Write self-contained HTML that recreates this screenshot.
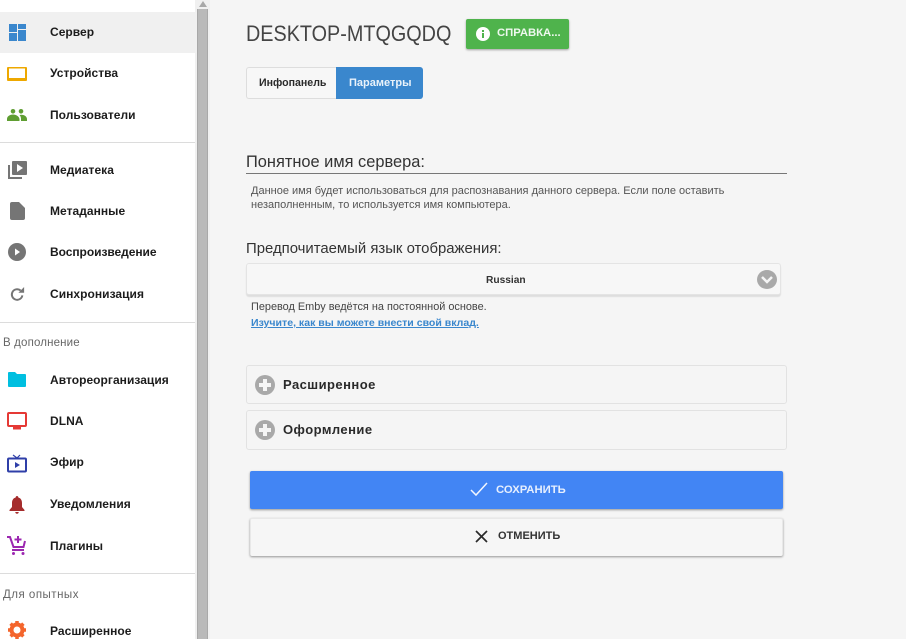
<!DOCTYPE html>
<html><head><meta charset="utf-8">
<style>
html,body{margin:0;padding:0;width:906px;height:639px;overflow:hidden;background:#f5f5f5;font-family:"Liberation Sans",sans-serif;}
.a{position:absolute;white-space:nowrap;}
#side{position:absolute;left:0;top:0;width:195px;height:639px;background:#fff;}
.nav{position:absolute;left:50px;font-size:12px;font-weight:bold;color:#1c1c1c;line-height:14px;white-space:nowrap;letter-spacing:.04px;}
.hr{position:absolute;left:0;width:195px;height:1px;background:#dcdcdc;}
.sec{position:absolute;left:3px;font-size:11.5px;color:#666;line-height:14px;white-space:nowrap;letter-spacing:.15px;}
svg{position:absolute;display:block;}
.coll{position:absolute;left:246px;width:539px;border:1px solid #e2e2e2;border-radius:3px;}
.plus{position:absolute;left:255px;width:20px;height:20px;border-radius:50%;background:#a9a9a9;}
.plus:before{content:"";position:absolute;left:4px;top:8px;width:12px;height:4px;background:#f5f5f5;}
.plus:after{content:"";position:absolute;left:8px;top:4px;width:4px;height:12px;background:#f5f5f5;}
.ct{position:absolute;left:283px;font-size:13px;font-weight:bold;color:#2a2a2a;line-height:16px;letter-spacing:.45px;white-space:nowrap;}
</style></head><body>
<div id="side">
<div style="position:absolute;left:0;top:12px;width:195px;height:41px;background:#f0f0f0"></div>

<svg style="left:9px;top:24px" width="17" height="17" viewBox="0 0 17 17"><path fill="#3a87cd" d="M0 0h8v8H0zM9 0h8v5H9zM0 9h8v8H0zM9 6h8v11H9z"/></svg>
<div class="nav" style="top:25px">Сервер</div>

<svg style="left:7px;top:67px" width="20" height="14" viewBox="0 0 20 14"><path fill="#eea800" d="M1 0h18a1 1 0 0 1 1 1v12a1 1 0 0 1-1 1H1a1 1 0 0 1-1-1V1a1 1 0 0 1 1-1zM2 1.500V11h16V1.500z" fill-rule="evenodd"/></svg>
<div class="nav" style="top:66px">Устройства</div>

<svg style="left:7px;top:109px" width="20" height="12" viewBox="0 0 20 12"><circle cx="6" cy="2.300" r="2.300" fill="#5f9e32"/><circle cx="14" cy="2.300" r="2.300" fill="#5f9e32"/><path fill="#5f9e32" d="M0 12v-2c0-3 3.500-4.500 6-4.500s6 1.500 6.500 4.500v2zM14 12v-2c0-1.600-.5-3-1.500-4 3-1 7.500.8 7.500 4v2z"/></svg>
<div class="nav" style="top:108px">Пользователи</div>

<div class="hr" style="top:142px"></div>

<svg style="left:8px;top:160px" width="19" height="20" viewBox="0 0 19 20"><path fill="none" stroke="#757575" stroke-width="2" d="M1 5v13h13"/><rect x="4" y="1" width="15" height="14" rx="1" fill="#757575"/><path fill="#fff" d="M9 4l6 4-6 4z"/></svg>
<div class="nav" style="top:163px">Медиатека</div>

<svg style="left:10px;top:202px" width="15" height="18" viewBox="0 0 15 18"><path fill="#757575" d="M2 0h7l6 6v10a2 2 0 0 1-2 2H2a2 2 0 0 1-2-2V2a2 2 0 0 1 2-2z"/></svg>
<div class="nav" style="top:204px">Метаданные</div>

<svg style="left:8px;top:243px" width="18" height="18" viewBox="0 0 18 18"><circle cx="9" cy="9" r="9" fill="#757575"/><path fill="#fff" d="M7 5.500l5 3.500-5 3.500z"/></svg>
<div class="nav" style="top:245px;letter-spacing:-.05px">Воспроизведение</div>

<svg style="left:10px;top:287px" width="15" height="15" viewBox="0 0 17 17"><path fill="none" stroke="#757575" stroke-width="2.200" d="M14 9.500A6 6 0 1 1 12 4"/><path fill="#757575" d="M9.500 6.500H16V0z"/></svg>
<div class="nav" style="top:287px">Синхронизация</div>

<div class="hr" style="top:322px"></div>
<div class="sec" style="top:336px">В дополнение</div>

<svg style="left:8px;top:372px" width="18" height="15" viewBox="0 0 18 15"><path fill="#00bfe0" d="M1 0h6l2 2h8a1 1 0 0 1 1 1v11a1 1 0 0 1-1 1H1a1 1 0 0 1-1-1V1a1 1 0 0 1 1-1z"/></svg>
<div class="nav" style="top:373px">Автореорганизация</div>

<svg style="left:7px;top:412px" width="20" height="18" viewBox="0 0 20 18"><rect x="1" y="1" width="18" height="13" rx="1" fill="#fff" stroke="#e53935" stroke-width="2"/><path fill="#e53935" d="M6 15h8v2.500H6z"/></svg>
<div class="nav" style="top:414px">DLNA</div>

<svg style="left:7px;top:454px" width="20" height="19" viewBox="0 0 20 19"><path fill="none" stroke="#2f3fa8" stroke-width="1.200" d="M6 1l4 3 3-3"/><rect x="1" y="4.500" width="18" height="13" rx="1" fill="#fff" stroke="#2f3fa8" stroke-width="2"/><path fill="#2f3fa8" d="M8 8l5 3-5 3z"/></svg>
<div class="nav" style="top:455px">Эфир</div>

<svg style="left:9px;top:496px" width="16" height="18" viewBox="0 0 16 18"><path fill="#a52c2c" d="M8 0a1.300 1.300 0 0 1 1.300 1.500C12 2.200 13 4.500 13 7v4l2.500 3v1H.5v-1L3 11V7c0-2.500 1-4.800 3.700-5.500A1.300 1.300 0 0 1 8 0zM6.300 16h3.400a1.700 1.700 0 0 1-3.400 0z"/></svg>
<div class="nav" style="top:497px">Уведомления</div>

<svg style="left:7px;top:536px" width="20" height="19" viewBox="0 0 20 19"><path fill="none" stroke="#9c27b0" stroke-width="2" d="M0 1h3l3.500 10h10l1.500-6"/><path fill="none" stroke="#9c27b0" stroke-width="2" d="M5 14h12M11 0v7M7.500 3.500h7"/><circle cx="6.500" cy="17.500" r="1.500" fill="#9c27b0"/><circle cx="16" cy="17.500" r="1.500" fill="#9c27b0"/></svg>
<div class="nav" style="top:539px">Плагины</div>

<div class="hr" style="top:573px"></div>
<div class="sec" style="top:588px;letter-spacing:.5px">Для опытных</div>

<svg style="left:8px;top:621px" width="18" height="18" viewBox="0 0 18 18"><circle cx="9" cy="9" r="5.500" fill="none" stroke="#f4652c" stroke-width="4"/><path fill="none" stroke="#f4652c" stroke-width="3.500" d="M9 0v3M9 15v3M0 9h3M15 9h3M2.600 2.600l2.100 2.100M13.300 13.300l2.100 2.100M2.600 15.400l2.100-2.100M13.300 4.700l2.100-2.100"/></svg>
<div class="nav" style="top:624px">Расширенное</div>
</div>

<div class="a" style="left:195px;top:0;width:15px;height:639px;background:#f0f0f0"></div>
<div class="a" style="left:197px;top:9px;width:11px;height:630px;background:#b9b9b9;border-left:1px solid #a8a8a8;border-right:1px solid #a8a8a8;box-sizing:border-box"></div>
<svg style="left:199px;top:1px" width="8" height="6" viewBox="0 0 8 6"><path fill="#a8a8a8" d="M4 0l4 6H0z"/></svg>

<div class="a" style="left:246px;top:22px;font-size:22px;line-height:24px;color:#444;transform:scaleX(.9);transform-origin:left center;">DESKTOP-MTQGQDQ</div>
<div class="a" style="left:466px;top:19px;width:103px;height:30px;background:#4fb34c;border-radius:2px;box-shadow:0 1px 2px rgba(0,0,0,.35)"></div>
<svg style="left:476px;top:27px" width="14" height="14" viewBox="0 0 14 14"><circle cx="7" cy="7" r="7" fill="#fff"/><path fill="#4fb34c" d="M6 3h2v2H6zM6 6h2v5H6z"/></svg>
<div class="a" style="left:497px;top:27px;font-size:11.300px;font-weight:bold;line-height:13px;color:#eef8ee;">СПРАВКА...</div>

<div class="a" style="left:246px;top:67px;width:90px;height:30px;border:1px solid #ddd;border-right:none;border-radius:3px 0 0 3px;background:#f7f7f7"></div>
<div class="a" style="left:336px;top:67px;width:87px;height:32px;background:#3a87cd;border-radius:0 3px 3px 0"></div>
<div class="a" style="left:259px;top:77px;font-size:10.600px;font-weight:bold;line-height:13px;color:#2a2a2a;">Инфопанель</div>
<div class="a" style="left:349px;top:77px;font-size:11px;font-weight:bold;line-height:13px;color:#e8f2fa;">Параметры</div>

<div class="a" style="left:246px;top:153px;font-size:16.400px;line-height:18px;color:#333;">Понятное имя сервера:</div>
<div class="a" style="left:246px;top:173px;width:541px;height:1px;background:#777"></div>
<div class="a" style="left:251px;top:184px;font-size:11px;line-height:14px;color:#555;">Данное имя будет использоваться для распознавания данного сервера. Если поле оставить<br>незаполненным, то используется имя компьютера.</div>

<div class="a" style="left:246px;top:241px;font-size:14.900px;line-height:17px;color:#333;">Предпочитаемый язык отображения:</div>
<div class="a" style="left:246px;top:263px;width:533px;height:30px;border:1px solid #e4e4e4;border-radius:3px;background:#f7f7f7;box-shadow:0 2px 1px #dedede"></div>
<div class="a" style="left:486px;top:274px;font-size:10.200px;font-weight:bold;line-height:13px;color:#333;">Russian</div>
<div class="a" style="left:757px;top:270px;width:20px;height:19px;border-radius:50%;background:#a9a9a9"></div>
<svg style="left:761px;top:276px" width="12" height="8" viewBox="0 0 12 8"><path fill="none" stroke="#f5f5f5" stroke-width="2.500" d="M1 1l5 5 5-5"/></svg>

<div class="a" style="left:251px;top:301px;font-size:10.900px;line-height:13px;color:#444;">Перевод Emby ведётся на постоянной основе.</div>
<div class="a" style="left:251px;top:317px;font-size:10.550px;font-weight:bold;line-height:13px;color:#3a87cd;text-decoration:underline;">Изучите, как вы можете внести свой вклад.</div>

<div class="coll" style="top:365px;height:37px"></div>
<div class="plus" style="top:375px"></div>
<div class="ct" style="top:377px">Расширенное</div>

<div class="coll" style="top:410px;height:38px"></div>
<div class="plus" style="top:420px"></div>
<div class="ct" style="top:422px">Оформление</div>

<div class="a" style="left:250px;top:471px;width:533px;height:38px;background:#4285f4;border-radius:2px;box-shadow:0 1px 2px rgba(0,0,0,.4)"></div>
<svg style="left:470px;top:482px" width="18" height="15" viewBox="0 0 18 15"><path fill="none" stroke="#f2f6fe" stroke-width="1.500" d="M1 8l5 5L17 1"/></svg>
<div class="a" style="left:496px;top:484px;font-size:11.300px;font-weight:bold;line-height:13px;color:#e6effe;">СОХРАНИТЬ</div>

<div class="a" style="left:250px;top:518px;width:531px;height:37px;background:#f6f6f6;border:1px solid #e8e8e8;border-bottom:none;border-radius:2px;box-shadow:0 1px 2px rgba(0,0,0,.4)"></div>
<svg style="left:475px;top:530px" width="13" height="13" viewBox="0 0 13 13"><path fill="none" stroke="#2a2a2a" stroke-width="1.700" d="M1 1l11 11M12 1L1 12"/></svg>
<div class="a" style="left:498px;top:530px;font-size:11px;font-weight:bold;line-height:13px;color:#333;">ОТМЕНИТЬ</div>
</body></html>
